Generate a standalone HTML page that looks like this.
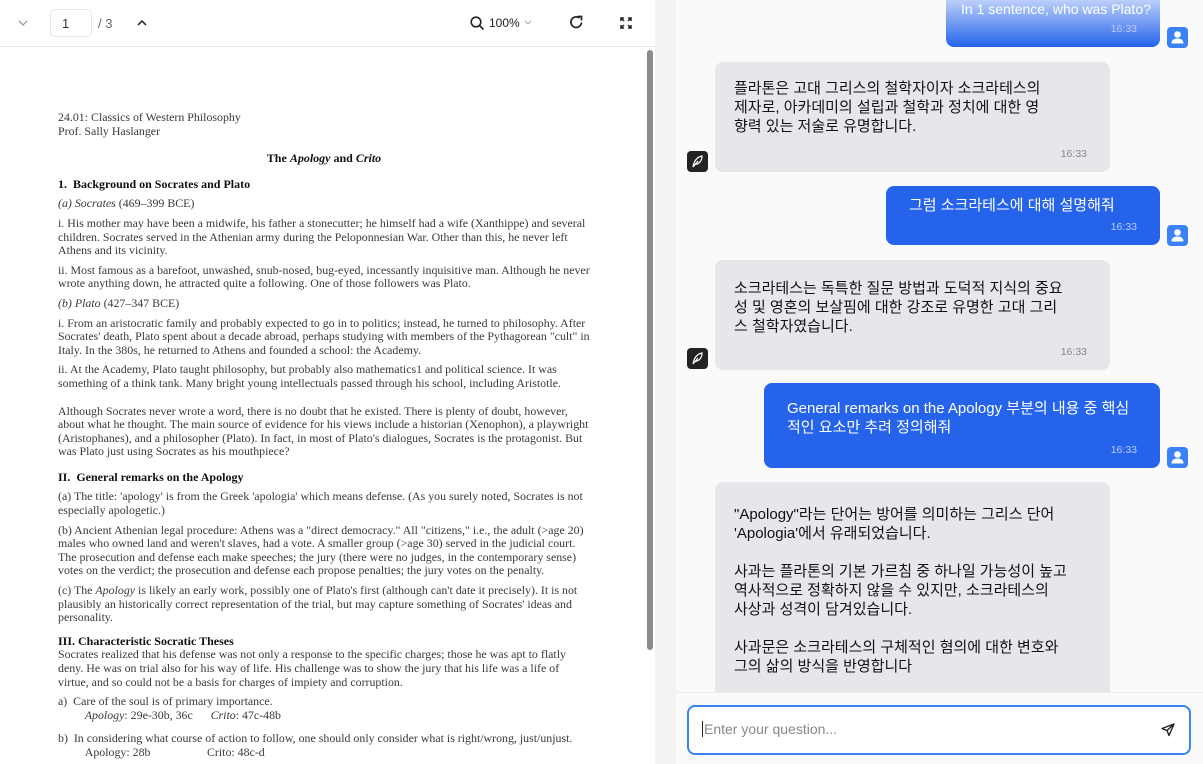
<!DOCTYPE html>
<html><head><meta charset="utf-8"><style>
*{box-sizing:border-box;margin:0;padding:0}
body{width:1203px;height:764px;overflow:hidden;background:#f3f3f3;font-family:"Liberation Sans","Noto Sans CJK KR",sans-serif;position:relative}
#left{position:absolute;left:0;top:0;width:655px;height:764px;background:#fff;overflow:hidden}
#tb{height:47px;border-bottom:1px solid #e8e8e8;position:relative;font-size:13px;color:#333}
#pg{position:absolute;left:50px;top:9px;width:42px;height:28px;border:1px solid #e5e5e5;border-radius:5px;padding:6px 0 0 11px}
#sb{position:absolute;left:647px;top:50px;width:6px;height:600px;background:#8a8a8a;border-radius:3px}
#doc{position:absolute;left:58px;top:111px;width:532px;font-family:"Liberation Serif",serif;font-size:11.9px;line-height:13.6px;color:#3a3a3a}
#doc p{margin-bottom:6px}
#doc h3{font-size:12px;font-weight:bold;color:#111;margin:6px 0 6px}
#chat{position:absolute;left:676px;top:0;width:527px;height:692px;background:#fafafa;overflow:hidden}
.b{position:absolute;border-radius:8px;font-size:15px;line-height:19px}
.u{background:#2563eb;color:#fff}
.a{background:#e5e7eb;color:#111}
.t{position:absolute;font-size:10.5px;right:23px;bottom:8px}
.u .t{color:#bcd0ff}.a .t{color:#888}
.av{position:absolute;width:21px;height:21px;border-radius:4px}
.av.user{background:#3b82f6;left:491px}
.av.bot{background:#222;left:11px}
#inp{position:absolute;left:687px;top:705px;width:504px;height:50px;border:2px solid #3b82f6;border-radius:8px;background:#fff;font-size:14px;color:#888;padding:14px 0 0 13px}
</style></head><body>
<div id="left">
<div id="tb">
<svg style="position:absolute;left:18px;top:19px" width="10" height="8"><path d="M1 2l4 4 4-4" fill="none" stroke="#999" stroke-width="1.3"/></svg>
<div id="pg">1</div><span style="position:absolute;left:98px;top:16px;color:#666">/ 3</span>
<svg style="position:absolute;left:137px;top:19px" width="10" height="8"><path d="M1 6l4-4 4 4" fill="none" stroke="#333" stroke-width="1.6"/></svg>
<svg style="position:absolute;left:470px;top:16px" width="15" height="15"><circle cx="6" cy="6" r="4.8" fill="none" stroke="#222" stroke-width="1.6"/><path d="M9.5 9.5l4 4" stroke="#222" stroke-width="1.6"/></svg>
<span style="position:absolute;left:489px;top:16px;font-size:12px;color:#222">100%</span>
<svg style="position:absolute;left:524px;top:20px" width="8" height="6"><path d="M1 1l3 3 3-3" fill="none" stroke="#aaa"/></svg>
<svg style="position:absolute;left:569px;top:15px" width="15" height="15"><path d="M12.5 7.5A5.3 5.3 0 1 1 10.5 3" fill="none" stroke="#222" stroke-width="1.7"/><path d="M8.5 1.5h4v4" fill="none" stroke="#222" stroke-width="1.7"/></svg>
<svg style="position:absolute;left:620px;top:17px" width="12" height="12"><path d="M1 4V1h3M8 1h3v3M11 8v3H8M4 11H1V8M1 1l3 3M11 1L8 4M11 11L8 8M1 11l3-3" fill="none" stroke="#222" stroke-width="1.5"/></svg>
</div>
<div id="sb"></div>
<div id="doc">
<p style="margin-bottom:14px">24.01: Classics of Western Philosophy<br>Prof. Sally Haslanger</p>
<p style="text-align:center;font-weight:bold;color:#111;font-size:12px;margin-bottom:12px">The <i>Apology</i> and <i>Crito</i></p>
<h3>1.&nbsp; Background on Socrates and Plato</h3>
<p><i>(a) Socrates</i> (469–399 BCE)</p>
<p>i. His mother may have been a midwife, his father a stonecutter; he himself had a wife (Xanthippe) and several children. Socrates served in the Athenian army during the Peloponnesian War. Other than this, he never left Athens and its vicinity.</p>
<p>ii. Most famous as a barefoot, unwashed, snub-nosed, bug-eyed, incessantly inquisitive man. Although he never wrote anything down, he attracted quite a following. One of those followers was Plato.</p>
<p><i>(b) Plato</i> (427–347 BCE)</p>
<p>i. From an aristocratic family and probably expected to go in to politics; instead, he turned to philosophy. After Socrates' death, Plato spent about a decade abroad, perhaps studying with members of the Pythagorean "cult" in Italy. In the 380s, he returned to Athens and founded a school: the Academy.</p>
<p style="margin-bottom:14px">ii. At the Academy, Plato taught philosophy, but probably also mathematics1 and political science. It was something of a think tank. Many bright young intellectuals passed through his school, including Aristotle.</p>
<p style="margin-bottom:12px">Although Socrates never wrote a word, there is no doubt that he existed. There is plenty of doubt, however, about what he thought. The main source of evidence for his views include a historian (Xenophon), a playwright (Aristophanes), and a philosopher (Plato). In fact, in most of Plato's dialogues, Socrates is the protagonist. But was Plato just using Socrates as his mouthpiece?</p>
<h3>II.&nbsp; General remarks on the Apology</h3>
<p>(a) The title: 'apology' is from the Greek 'apologia' which means defense. (As you surely noted, Socrates is not especially apologetic.)</p>
<p>(b) Ancient Athenian legal procedure: Athens was a "direct democracy." All "citizens," i.e., the adult (&gt;age 20) males who owned land and weren't slaves, had a vote. A smaller group (&gt;age 30) served in the judicial court. The prosecution and defense each make speeches; the jury (there were no judges, in the contemporary sense) votes on the verdict; the prosecution and defense each propose penalties; the jury votes on the penalty.</p>
<p>(c) The <i>Apology</i> is likely an early work, possibly one of Plato's first (although can't date it precisely). It is not plausibly an historically correct representation of the trial, but may capture something of Socrates' ideas and personality.</p>
<h3 style="margin:10px 0 0">III. Characteristic Socratic Theses</h3>
<p>Socrates realized that his defense was not only a response to the specific charges; those he was apt to flatly deny. He was on trial also for his way of life. His challenge was to show the jury that his life was a life of virtue, and so could not be a basis for charges of impiety and corruption.</p>
<p>a)&nbsp; Care of the soul is of primary importance.<br>&nbsp;&nbsp;&nbsp;&nbsp;&nbsp;&nbsp;&nbsp;&nbsp;&nbsp;<i>Apology</i>: 29e-30b, 36c&nbsp;&nbsp;&nbsp;&nbsp;&nbsp; <i>Crito</i>: 47c-48b</p>
<p style="margin-top:10px">b)&nbsp; In considering what course of action to follow, one should only consider what is right/wrong, just/unjust.<br>&nbsp;&nbsp;&nbsp;&nbsp;&nbsp;&nbsp;&nbsp;&nbsp;&nbsp;Apology: 28b&nbsp;&nbsp;&nbsp;&nbsp;&nbsp;&nbsp;&nbsp;&nbsp;&nbsp;&nbsp;&nbsp;&nbsp;&nbsp;&nbsp;&nbsp;&nbsp;&nbsp;&nbsp; Crito: 48c-d</p>
</div>
</div>
<div id="chat">
<div class="b u" style="left:270px;top:-10px;width:214px;height:57px;background:linear-gradient(#dbe6fd,#2563eb)"><div style="position:absolute;left:15px;top:10px;color:#fff;font-size:14px;white-space:nowrap">In 1 sentence, who was Plato?</div><div class="t">16:33</div></div>
<div class="av user" style="top:27px"><svg width="21" height="21"><circle cx="10.5" cy="7.5" r="3.3" fill="#fff"/><path d="M4.5 16.5c0-3.5 2.5-5 6-5s6 1.5 6 5z" fill="#fff"/></svg></div>
<div class="b a" style="left:39px;top:62px;width:395px;height:110px;padding:17px 19px">플라톤은 고대 그리스의 철학자이자 소크라테스의<br>제자로, 아카데미의 설립과 철학과 정치에 대한 영<br>향력 있는 저술로 유명합니다.<div class="t">16:33</div></div>
<div class="av bot" style="top:151px"><svg width="21" height="21"><path d="M6 16C7 10 10 6 15 5c0 5-3 8-7 8.5M6 16l5-6" fill="none" stroke="#fff" stroke-width="1.2"/></svg></div>
<div class="b u" style="left:210px;top:186px;width:274px;height:59px;padding:10px 23px">그럼 소크라테스에 대해 설명해줘<div class="t">16:33</div></div>
<div class="av user" style="top:225px"><svg width="21" height="21"><circle cx="10.5" cy="7.5" r="3.3" fill="#fff"/><path d="M4.5 16.5c0-3.5 2.5-5 6-5s6 1.5 6 5z" fill="#fff"/></svg></div>
<div class="b a" style="left:39px;top:260px;width:395px;height:110px;padding:19px 19px">소크라테스는 독특한 질문 방법과 도덕적 지식의 중요<br>성 및 영혼의 보살핌에 대한 강조로 유명한 고대 그리<br>스 철학자였습니다.<div class="t">16:33</div></div>
<div class="av bot" style="top:348px"><svg width="21" height="21"><path d="M6 16C7 10 10 6 15 5c0 5-3 8-7 8.5M6 16l5-6" fill="none" stroke="#fff" stroke-width="1.2"/></svg></div>
<div class="b u" style="left:88px;top:383px;width:396px;height:85px;padding:16px 23px">General remarks on the Apology 부분의 내용 중 핵심<br>적인 요소만 추려 정의해줘<div class="t">16:33</div></div>
<div class="av user" style="top:447px"><svg width="21" height="21"><circle cx="10.5" cy="7.5" r="3.3" fill="#fff"/><path d="M4.5 16.5c0-3.5 2.5-5 6-5s6 1.5 6 5z" fill="#fff"/></svg></div>
<div class="b a" style="left:39px;top:482px;width:395px;height:230px;padding:23px 19px">"Apology"라는 단어는 방어를 의미하는 그리스 단어<br>'Apologia'에서 유래되었습니다.<br><br>사과는 플라톤의 기본 가르침 중 하나일 가능성이 높고<br>역사적으로 정확하지 않을 수 있지만, 소크라테스의<br>사상과 성격이 담겨있습니다.<br><br>사과문은 소크라테스의 구체적인 혐의에 대한 변호와<br>그의 삶의 방식을 반영합니다</div>
</div>
<div style="position:absolute;left:676px;top:692px;width:527px;height:72px;background:#fafafa;border-top:1px solid #eee"></div>
<div id="inp"><span style="border-left:1px solid #222;padding-left:1px">Enter your question...</span>
<svg style="position:absolute;right:14px;top:16px" width="14" height="14"><path d="M13 1L1 5.5l5 2 2 5z M13 1L6 7.5" fill="none" stroke="#222" stroke-width="1.4" stroke-linejoin="round"/></svg></div>
</body></html>
